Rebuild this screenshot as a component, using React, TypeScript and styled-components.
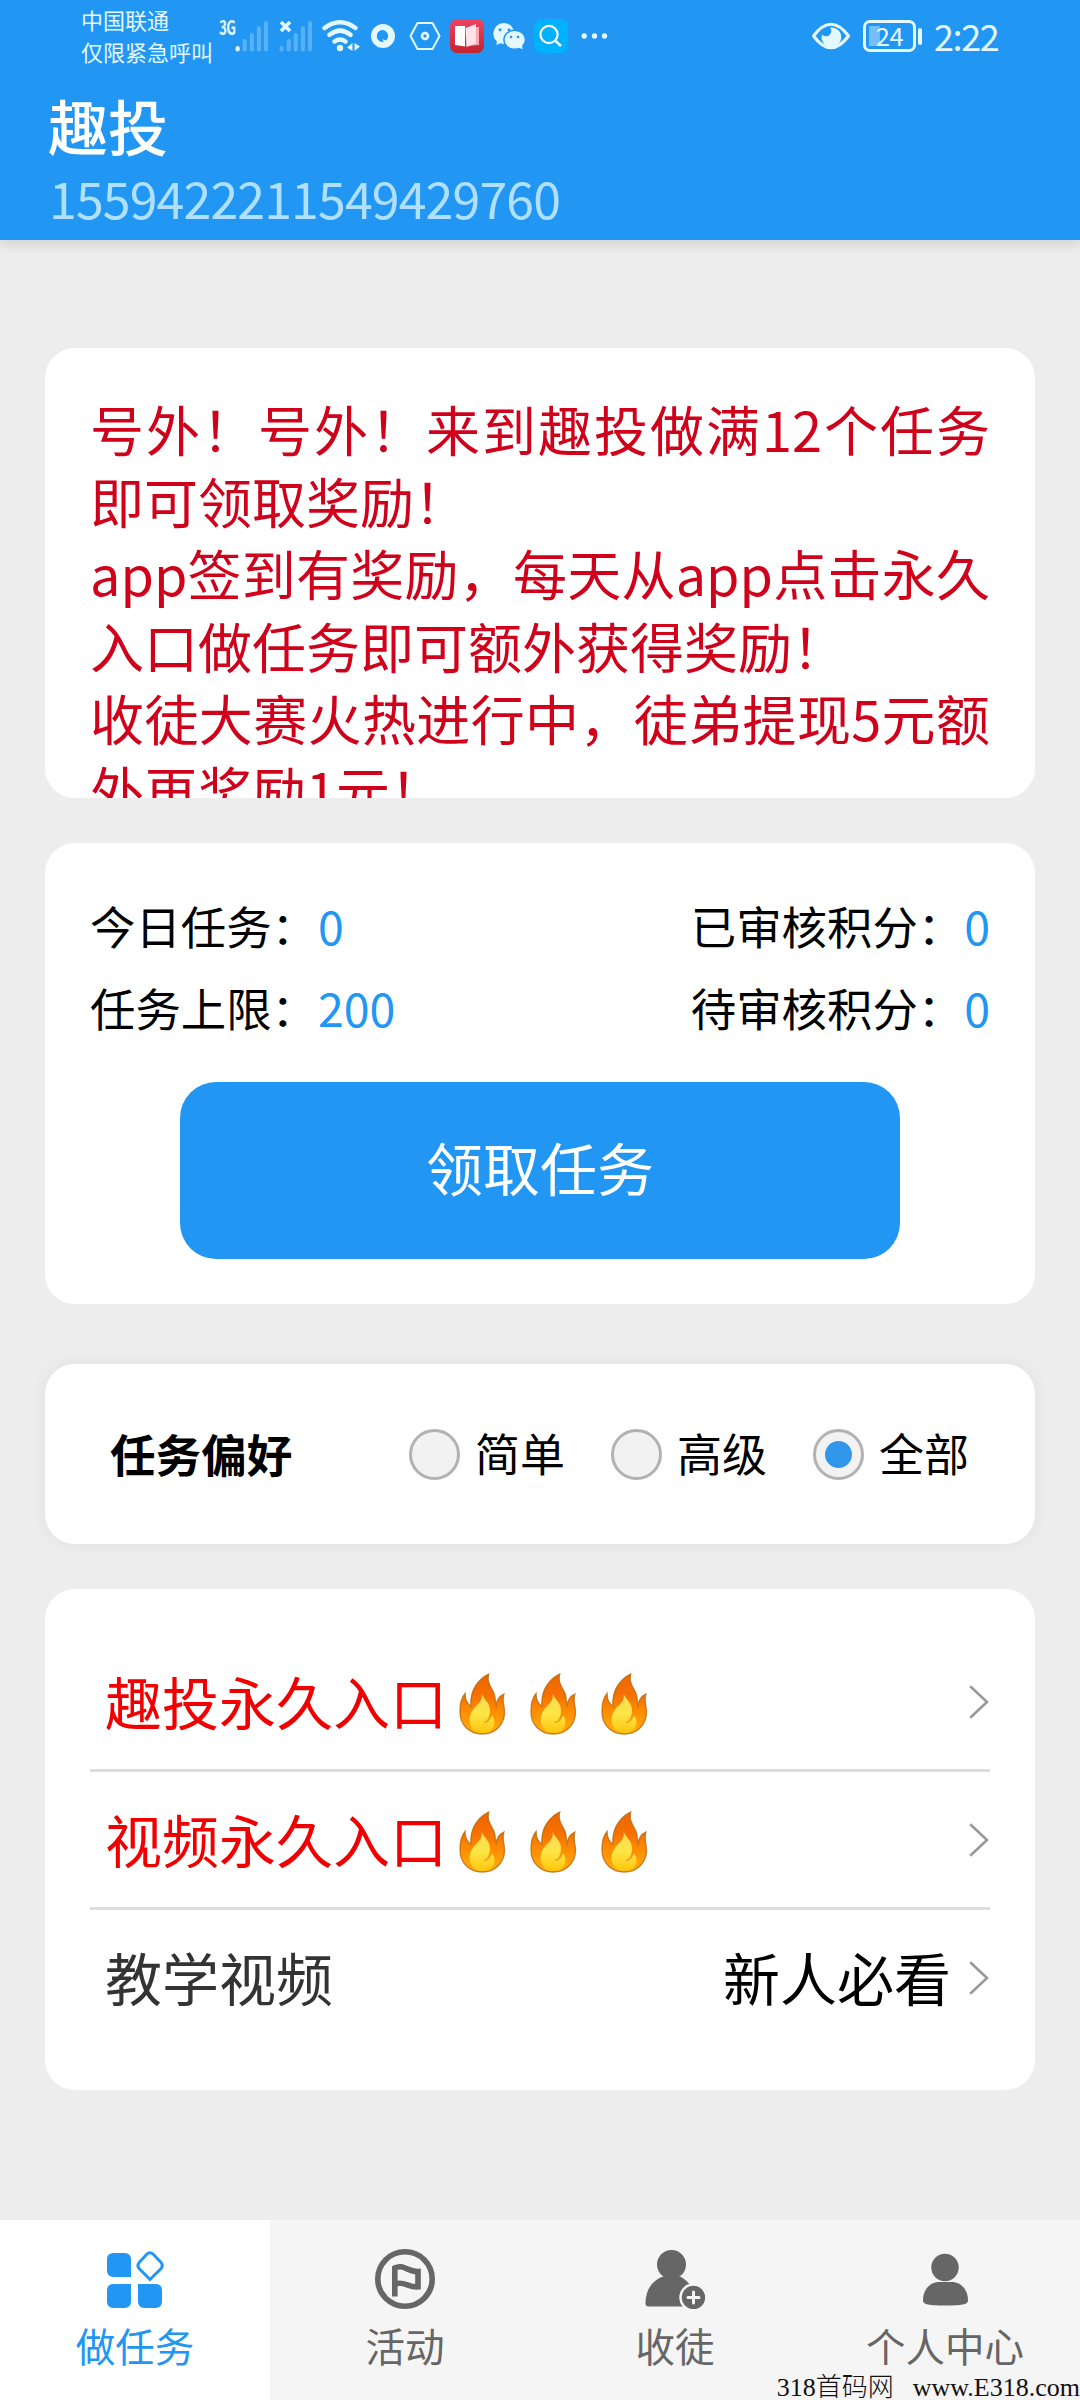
import React, { useState } from 'react';
import styled, { createGlobalStyle } from 'styled-components';

const BLUE = '#2196f3';
const ICE = '#e3f8ff';
const GRAY = '#666666';

const GlobalStyle = createGlobalStyle`
  * { box-sizing: border-box; }
  html, body { margin: 0; padding: 0; }
  body {
    background: #ededed;
    font-family: "Noto Sans CJK SC", "Noto Sans", sans-serif;
    color: #000;
  }
`;

const Page = styled.div`
  width: 1080px;
  height: 2400px;
  display: flex;
  flex-direction: column;
  overflow: hidden;
  background: #ededed;
`;

const Header = styled.header`
  height: 240px;
  flex: none;
  background: ${BLUE};
  box-shadow: 0 2px 14px rgba(0, 0, 0, 0.16);
`;

const StatusBar = styled.div`
  height: 72px;
  display: flex;
  align-items: flex-start;
  padding-left: 81px;
  color: ${ICE};
`;

const Carrier = styled.div`
  width: 138px;
  padding-top: 3px;
  font-size: 22px;
  line-height: 32px;
  white-space: nowrap;
`;

const NetworkType = styled.span`
  width: 16px;
  padding-top: 17px;
  font: 700 20px/20px "Noto Sans CJK SC", sans-serif;
  letter-spacing: -1px;
  transform: scaleX(0.68);
  transform-origin: left;
`;

const StatusIcon = styled.svg<{ $gap?: number }>`
  flex: none;
  display: block;
  height: 72px;
  margin-left: ${(p) => p.$gap ?? 0}px;
`;

const Battery = styled.div`
  display: flex;
  align-items: center;
  margin: 20px 0 0 12px;
  height: 32px;
`;

const BatteryBody = styled.div<{ $level: number }>`
  width: 53px;
  height: 32px;
  border: 3px solid ${ICE};
  border-radius: 7px;
  padding: 3px;
  background: linear-gradient(rgba(255, 255, 255, 0.38), rgba(255, 255, 255, 0.38)) 3px 3px /
    ${(p) => p.$level * 0.45}px 20px no-repeat;
  font-size: 25.5px;
  line-height: 18px;
  letter-spacing: -0.5px;
  text-align: center;
`;

const BatteryCap = styled.div`
  width: 4px;
  height: 17px;
  margin-left: 2px;
  border-radius: 2px;
  background: ${ICE};
`;

const Clock = styled.span`
  margin: 10px 0 0 12px;
  font-size: 36px;
  line-height: 50px;
  letter-spacing: -1.4px;
  white-space: nowrap;
`;

const AppTitle = styled.h1`
  margin: 0;
  padding: 15px 0 0 48px;
  font-size: 60px;
  line-height: 76px;
  font-weight: 500;
  color: #fff;
`;

const UserId = styled.div`
  padding-left: 49px;
  font-size: 50px;
  line-height: 68px;
  letter-spacing: -0.85px;
  color: #b0e0ff;
`;

const Content = styled.main`
  flex: 1;
  display: flex;
  flex-direction: column;
  padding: 108px 45px 0;
`;

const Card = styled.section<{ $top?: number }>`
  flex: none;
  margin-top: ${(p) => p.$top ?? 0}px;
  border-radius: 30px;
  background: #fff;
`;

const NoticeCard = styled(Card)`
  height: 450px;
  padding: 45px 45px 0;
  overflow: hidden;
`;

const Notice = styled.p`
  margin: 0;
  font-size: 54px;
  line-height: 72.2px;
  text-align: justify;
  color: #d0021b;
`;

const StatsCard = styled(Card)`
  height: 461px;
  padding: 41px 45px 0;
`;

const StatRow = styled.div`
  height: 82px;
  display: flex;
  align-items: center;
  justify-content: space-between;
`;

const Stat = styled.div`
  display: flex;
  align-items: center;
  font-size: 45.4px;
  line-height: 82px;
`;

const StatValue = styled.span`
  margin-left: 1px;
  font-size: 46.5px;
  color: ${BLUE};
`;

const ClaimButton = styled.button`
  display: block;
  width: 720px;
  height: 177px;
  margin: 34px auto 0;
  padding: 0 0 9px;
  border: 0;
  border-radius: 36px;
  background: ${BLUE};
  color: #fff;
  font-family: inherit;
  font-size: 57px;
`;

const PreferenceCard = styled(Card)`
  height: 180px;
  padding: 0 66px 0 65px;
  display: flex;
  align-items: center;
  justify-content: space-between;
  box-shadow: 0 0 18px rgba(0, 0, 0, 0.06);
`;

const PreferenceTitle = styled.h2`
  margin: -2px 0 0;
  font-size: 45.6px;
  line-height: 60px;
  font-weight: 700;
`;

const RadioGroup = styled.div`
  display: flex;
  gap: 44px;
`;

const RadioOption = styled.label`
  display: flex;
  align-items: center;
  gap: 15px;
  font-size: 45px;
  line-height: 60px;
`;

const RadioText = styled.span`
  margin-top: -2px;
`;

const RadioInput = styled.input`
  appearance: none;
  display: grid;
  place-items: center;
  width: 51px;
  height: 51px;
  margin: 0 0 0 2px;
  border: 3px solid #b2b2b2;
  border-radius: 50%;
  background: #f2f2f2;

  &:checked::before {
    content: '';
    width: 27px;
    height: 27px;
    border-radius: 50%;
    background: #3296eb;
  }
`;

const LinkCard = styled(Card)`
  height: 501px;
  padding: 45px 45px 0;
`;

const LinkRow = styled.a<{ $color: string }>`
  height: 138px;
  display: flex;
  align-items: center;
  padding-left: 15px;
  border-bottom: 3px solid #ddd;
  font-size: 57px;
  line-height: 80px;
  color: ${(p) => p.$color};

  &:last-child { border-bottom-color: transparent; }
`;

const RowLabel = styled.span`
  margin-top: -3px;
`;

const Flames = styled.span`
  display: flex;
  gap: 24.5px;
  margin: 4px 0 0 12px;
`;

const RowHint = styled(RowLabel)`
  margin-left: auto;
  color: #000;
`;

const Chevron = styled.svg`
  margin: 0 1px 0 auto;
  ${RowHint} + & { margin-left: 18px; }
`;

const TabBar = styled.nav`
  flex: none;
  position: relative;
  display: grid;
  grid-template-columns: repeat(4, 1fr);
  height: 180px;
`;

const Tab = styled.a<{ $active?: boolean }>`
  display: flex;
  flex-direction: column;
  align-items: center;
  gap: 11px;
  padding-top: 29px;
  font-size: 39.5px;
  line-height: 50px;
  background: ${(p) => (p.$active ? '#fff' : '#f5f5f5')};
  color: ${(p) => (p.$active ? BLUE : GRAY)};
`;

const Watermark = styled.div`
  position: absolute;
  right: 0;
  bottom: -5px;
  font: 300 26px/34px "Liberation Serif", "Noto Sans CJK SC", serif;
  color: #111;
  white-space: nowrap;
`;

const WatermarkSite = styled.span`
  margin-left: 19px;
`;

const SignalBars = ({ x, active }: { x: number; active: boolean }) => (
  <g fill={ICE}>
    {[46, 39, 33, 26, 21].map((top, i) => (
      <rect
        key={top}
        x={x + i * 7.1}
        y={top}
        width={4.2}
        height={51.5 - top}
        rx={2}
        opacity={active && i === 0 ? 1 : 0.28}
      />
    ))}
  </g>
);

const Flame = ({ id }: { id: string }) => (
  <svg width="46.5" height="62" viewBox="-2 -2 144 189" preserveAspectRatio="none">
    <defs>
      <linearGradient id={`${id}o`} x1="0" y1="0" x2="0" y2="1">
        <stop offset="0" stopColor="#ee6500" />
        <stop offset="0.35" stopColor="#f57000" />
        <stop offset="0.6" stopColor="#ff8a00" />
        <stop offset="1" stopColor="#ffb010" />
      </linearGradient>
      <linearGradient id={`${id}i`} x1="0" y1="0" x2="0" y2="1">
        <stop offset="0" stopColor="#fbd95a" />
        <stop offset="0.5" stopColor="#fde645" />
        <stop offset="1" stopColor="#ffc50c" />
      </linearGradient>
    </defs>
    <path
      d="M90 1C62 14 31 46 35 99C24 92 16 78 17 60C6 72 1 92 1 115C1 158 32 184 70 184C108 184 139 158 139 115C138 98 131 82 137 62C124 68 114 80 113 98C108 88 113 78 107 62C100 42 83 30 90 1Z"
      fill={`url(#${id}o)`}
      stroke="#b56a10"
      strokeWidth="4"
      strokeOpacity="0.8"
    />
    <path
      d="M68 62C72 80 58 92 46 104C36 116 30 128 31 145C33 168 50 181 70 181C92 181 108 168 108 148C108 138 104 130 98 128C94 136 88 142 82 144C94 134 96 112 92 100C88 86 76 78 68 62Z"
      fill={`url(#${id}i)`}
    />
    <path d="M97 126C96 138 87 147 77 148" fill="none" stroke="#d69a1c" strokeWidth="5" strokeLinecap="round" opacity="0.75" />
  </svg>
);

const FlameTrio = ({ id }: { id: string }) => (
  <Flames>
    {[0, 1, 2].map((n) => (
      <Flame key={n} id={`${id}${n}`} />
    ))}
  </Flames>
);

const ChevronRight = () => (
  <Chevron width="20" height="34" viewBox="0 0 20 34" fill="none" stroke="#999" strokeWidth="2.6">
    <path d="M1.2 1.2L18 17L1.2 32.8" />
  </Chevron>
);

const TasksIcon = () => (
  <svg width="60" height="60" viewBox="0 0 60 60" fill="currentColor">
    <path d="M8.500 4H19.500Q26 4 26 10.500V28H8.500Q2 28 2 21.500V10.500Q2 4 8.500 4Z" />
    <path d="M8.500 35H26V52.500Q26 59 19.500 59H8.500Q2 59 2 52.500V41.500Q2 35 8.500 35Z" />
    <path d="M33 35H50.500Q57 35 57 41.500V52.500Q57 59 50.500 59H39.500Q33 59 33 52.500Z" />
    <path
      d="M45 30.500L34.600 20Q31.200 16.500 34.600 13L41.500 5.500Q45 2 48.500 5.500L55.600 13Q59 16.500 55.600 20Z"
      fill="none"
      stroke="currentColor"
      strokeWidth="3"
    />
  </svg>
);

const FlagIcon = () => (
  <svg width="60" height="60" viewBox="0 0 60 60" fill="none" stroke="currentColor">
    <circle cx="30" cy="30" r="27.200" strokeWidth="5.600" />
    <path d="M19.800 47.500V19C28 14.500 33 23 43 22.500V37.800C33 38.500 29 31.500 19.800 35" strokeWidth="5.600" />
  </svg>
);

const InviteIcon = () => (
  <svg width="60" height="60" viewBox="0 0 60 60">
    <g fill="currentColor">
      <circle cx="26.500" cy="15.500" r="14.500" />
      <path d="M18 27.500H35C42 31 52 40 52 57.500H3.500Q0.500 57.500 0.500 54.500C0.500 40 8 31 18 27.500Z" />
    </g>
    <circle cx="48.500" cy="48.500" r="14.200" fill="#f5f5f5" />
    <circle cx="48.500" cy="48.500" r="11.700" fill="currentColor" />
    <path d="M48.500 43V54M43 48.500H54" stroke="#f5f5f5" strokeWidth="3" strokeLinecap="round" />
  </svg>
);

const ProfileIcon = () => (
  <svg width="60" height="60" viewBox="0 0 60 60" fill="currentColor">
    <circle cx="30" cy="18.500" r="13.700" />
    <path d="M24 33H37C46 33 53 41 53 51C53 55 50 56.500 30.500 56.500C11 56.500 8 55 8 51C8 41 15 33 24 33Z" />
  </svg>
);

const tabs = [
  { label: '做任务', Icon: TasksIcon },
  { label: '活动', Icon: FlagIcon },
  { label: '收徒', Icon: InviteIcon },
  { label: '个人中心', Icon: ProfileIcon },
];

const stats = [
  [
    { label: '今日任务：', value: 0 },
    { label: '已审核积分：', value: 0 },
  ],
  [
    { label: '任务上限：', value: 200 },
    { label: '待审核积分：', value: 0 },
  ],
];

const Status = () => (
  <StatusBar>
    <Carrier>
      中国联通
      <br />
      仅限紧急呼叫
    </Carrier>
    <NetworkType>3G</NetworkType>
    <StatusIcon width="34" viewBox="235 0 34 72">
      <SignalBars x={235.500} active />
    </StatusIcon>
    <StatusIcon width="49" viewBox="269 0 49 72">
      <path d="M281 22L290 31M290 22L281 31" stroke={ICE} strokeWidth="3.600" />
      <SignalBars x={279.500} active={false} />
    </StatusIcon>
    <StatusIcon width="44" viewBox="318 0 44 72">
      <g fill="none" stroke={ICE} strokeWidth="4.600" strokeLinecap="round">
        <path d="M324.500 28Q340 16.500 355.500 28" />
        <path d="M329.500 34.800Q340 26.500 350.500 34.800" />
        <path d="M334.500 41.500Q340 37.500 345.500 41.500" />
      </g>
      <circle cx="340" cy="48" r="3.200" fill={ICE} />
      <path d="M352.500 43V51L347 47.500ZM354.500 43L360 46.500L354.500 51Z" fill={ICE} />
    </StatusIcon>
    <StatusIcon width="40" viewBox="362 0 40 72">
      <path
        fillRule="evenodd"
        fill={ICE}
        d="M383 24A12 12 0 1 1 383 48A12 12 0 1 1 383 24ZM382 30A6 6 0 1 0 383.500 42L382.500 39L386 40.500A6 6 0 0 0 382 30Z"
      />
    </StatusIcon>
    <StatusIcon width="46" viewBox="402 0 46 72">
      <path d="M417.500 23H432.500L439.500 36L432.500 49H417.500L410.500 36Z" fill="none" stroke={ICE} strokeWidth="2" strokeLinejoin="round" />
      <circle cx="425" cy="36" r="3" fill="none" stroke={ICE} strokeWidth="2.600" />
    </StatusIcon>
    <StatusIcon width="40" viewBox="448 0 40 72">
      <defs>
        <linearGradient id="reader" x1="0" y1="0" x2="0" y2="1">
          <stop offset="0" stopColor="#ef4460" />
          <stop offset="1" stopColor="#c32330" />
        </linearGradient>
      </defs>
      <rect x="450" y="19" width="34" height="34" rx="7" fill="url(#reader)" />
      <path d="M455 26H465V46.500L455 45Z" fill="#fff" />
      <path d="M473 27H479V45L466 46Z" fill="#f9a9b4" />
      <path d="M465.500 28L476 24V43.500L466.500 47Z" fill="#ffe3e8" />
    </StatusIcon>
    <StatusIcon width="42" viewBox="488 0 42 72">
      <g fill={ICE}>
        <ellipse cx="503.800" cy="33.500" rx="10.500" ry="10.500" />
        <path d="M497 40L496.500 45L502 42.500Z" />
      </g>
      <ellipse cx="514.700" cy="39.800" rx="10.800" ry="9.500" fill={ICE} stroke={BLUE} strokeWidth="1.400" />
      <path d="M518 47L522.500 49.500L522 45Z" fill={ICE} />
      <g fill={BLUE}>
        <circle cx="500" cy="29.700" r="1.500" />
        <circle cx="509" cy="29.700" r="1.500" />
        <circle cx="511" cy="37" r="1.300" />
        <circle cx="518" cy="37" r="1.300" />
      </g>
    </StatusIcon>
    <StatusIcon width="44" viewBox="530 0 44 72">
      <rect x="534" y="19" width="34" height="34" rx="7" fill="#00b1fc" />
      <circle cx="549" cy="34.500" r="8.600" fill="none" stroke="#fff" strokeWidth="2.200" />
      <path d="M555 40.500L561 46" stroke="#fff" strokeWidth="2.400" />
    </StatusIcon>
    <StatusIcon width="36" viewBox="574 0 36 72">
      <g fill={ICE}>
        <circle cx="584.200" cy="36" r="2.700" />
        <circle cx="594.500" cy="36" r="2.700" />
        <circle cx="604.500" cy="36" r="2.700" />
      </g>
    </StatusIcon>
    <StatusIcon width="40" viewBox="811 0 40 72" $gap={201}>
      <path d="M813.500 36Q831 12.500 848.500 36Q831 59.500 813.500 36Z" fill="none" stroke={ICE} strokeWidth="3.200" strokeLinejoin="round" />
      <path d="M830 27.500A9.800 9.800 0 1 1 822 34.500A4.800 4.800 0 0 0 830 27.500Z" fill={ICE} />
    </StatusIcon>
    <Battery>
      <BatteryBody $level={24}>24</BatteryBody>
      <BatteryCap />
    </Battery>
    <Clock>2:22</Clock>
  </StatusBar>
);

export default function App() {
  const [preference, setPreference] = useState('全部');

  return (
    <>
      <GlobalStyle />
      <Page>
        <Header>
          <Status />
          <AppTitle>趣投</AppTitle>
          <UserId>1559422211549429760</UserId>
        </Header>

        <Content>
          <NoticeCard>
            <Notice>号外！号外！来到趣投做满12个任务即可领取奖励！</Notice>
            <Notice>app签到有奖励，每天从app点击永久入口做任务即可额外获得奖励！</Notice>
            <Notice>收徒大赛火热进行中，徒弟提现5元额外再奖励1元！</Notice>
          </NoticeCard>

          <StatsCard $top={45}>
            {stats.map((row) => (
              <StatRow key={row[0].label}>
                {row.map((item) => (
                  <Stat key={item.label}>
                    {item.label}
                    <StatValue>{item.value}</StatValue>
                  </Stat>
                ))}
              </StatRow>
            ))}
            <ClaimButton>领取任务</ClaimButton>
          </StatsCard>

          <PreferenceCard $top={60}>
            <PreferenceTitle>任务偏好</PreferenceTitle>
            <RadioGroup>
              {['简单', '高级', '全部'].map((option) => (
                <RadioOption key={option}>
                  <RadioInput
                    type="radio"
                    name="preference"
                    checked={preference === option}
                    onChange={() => setPreference(option)}
                  />
                  <RadioText>{option}</RadioText>
                </RadioOption>
              ))}
            </RadioGroup>
          </PreferenceCard>

          <LinkCard $top={45}>
            <LinkRow $color="#f00000">
              <RowLabel>趣投永久入口</RowLabel>
              <FlameTrio id="a" />
              <ChevronRight />
            </LinkRow>
            <LinkRow $color="#f00000">
              <RowLabel>视频永久入口</RowLabel>
              <FlameTrio id="b" />
              <ChevronRight />
            </LinkRow>
            <LinkRow $color="#333">
              <RowLabel>教学视频</RowLabel>
              <RowHint>新人必看</RowHint>
              <ChevronRight />
            </LinkRow>
          </LinkCard>
        </Content>

        <TabBar>
          {tabs.map(({ label, Icon }, i) => (
            <Tab key={label} $active={i === 0}>
              <Icon />
              {label}
            </Tab>
          ))}
          <Watermark>
            318首码网<WatermarkSite>www.E318.com</WatermarkSite>
          </Watermark>
        </TabBar>
      </Page>
    </>
  );
}
